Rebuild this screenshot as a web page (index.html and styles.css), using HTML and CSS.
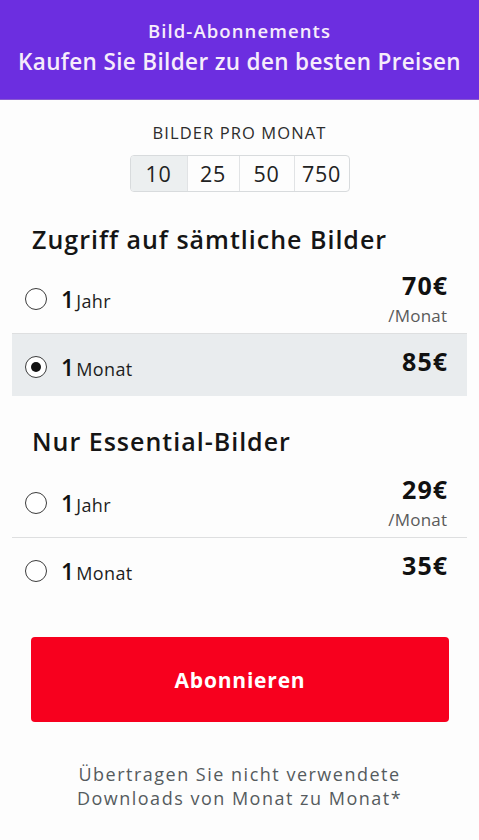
FILE: index.html
```html
<!DOCTYPE html>
<html lang="de">
<head>
<meta charset="utf-8">
<title>Bild-Abonnements</title>
<link rel="stylesheet" href="styles.css">
</head>
<body>
<header class="top">
  <div class="top-sub">Bild-Abonnements</div>
  <div class="top-main">Kaufen Sie Bilder zu den besten Preisen</div>
</header>
<main class="main">
  <div class="count-label">BILDER PRO MONAT</div>
  <div class="seg-wrap">
    <div class="seg">
      <span class="seg-item active">10</span>
      <span class="seg-item">25</span>
      <span class="seg-item">50</span>
      <span class="seg-item">750</span>
    </div>
  </div>

  <h2 class="sec-title first">Zugriff auf sämtliche Bilder</h2>
  <div class="row sep">
    <div class="opt"><span class="radio"></span><span class="num">1</span><span class="unit">Jahr</span></div>
    <div class="price"><div class="amount">70€</div><div class="per">/Monat</div></div>
  </div>
  <div class="row single selected">
    <div class="opt"><span class="radio on"></span><span class="num">1</span><span class="unit">Monat</span></div>
    <div class="price"><div class="amount">85€</div></div>
  </div>

  <h2 class="sec-title second">Nur Essential-Bilder</h2>
  <div class="row sep">
    <div class="opt"><span class="radio"></span><span class="num">1</span><span class="unit">Jahr</span></div>
    <div class="price"><div class="amount">29€</div><div class="per">/Monat</div></div>
  </div>
  <div class="row single">
    <div class="opt"><span class="radio"></span><span class="num">1</span><span class="unit">Monat</span></div>
    <div class="price"><div class="amount">35€</div></div>
  </div>

  <button class="cta">Abonnieren</button>

  <p class="note">Übertragen Sie nicht verwendete<br>Downloads von Monat zu Monat*</p>
</main>
</body>
</html>
```

FILE: styles.css
```css
* { box-sizing: border-box; }
body {
  margin: 0;
  background: #fdfdfd;
  font-family: "Open Sans", "Noto Sans", sans-serif;
  color: #1a1a1a;
}
.top {
  background: #6c2ee0;
  height: 100px;
  color: #f6ecfb;
  text-align: center;
  padding-top: 18px;
  border-bottom: 1px solid #8a5ad0;
}
.top-sub {
  font-size: 18.5px;
  line-height: 26px;
  font-weight: 600;
  letter-spacing: 1.1px;
}
.top-main {
  font-size: 22.5px;
  line-height: 30px;
  margin-top: 3px;
  font-weight: 600;
  letter-spacing: 0.35px;
}
.main {
  padding: 0 12px;
}
.count-label {
  margin-top: 22px;
  text-align: center;
  font-size: 16.5px;
  line-height: 22px;
  font-weight: 500;
  letter-spacing: 1.1px;
  color: #2c2c2c;
}
.seg-wrap {
  display: flex;
  justify-content: center;
  margin-top: 11px;
}
.seg {
  display: grid;
  grid-template-columns: 56px 52px 55px 55px;
  height: 37px;
  border: 1px solid #d8dbdd;
  border-radius: 4px;
  overflow: hidden;
}
.seg-item {
  display: flex;
  align-items: center;
  justify-content: center;
  font-size: 21.5px;
  font-weight: 500;
  letter-spacing: 0.7px;
  color: #222;
  border-left: 1px solid #e1e3e5;
}
.seg-item:first-child { border-left: 0; }
.seg-item.active { background: #eceff0; }
.sec-title {
  margin: 0;
  padding-left: 20px;
  font-size: 25px;
  line-height: 30px;
  font-weight: 600;
  letter-spacing: 1px;
  color: #151515;
}
.sec-title.first { margin-top: 32px; margin-bottom: 10px; }
.sec-title.second { margin-top: 30px; margin-bottom: 12px; }
.row {
  display: flex;
  align-items: center;
  justify-content: space-between;
  padding: 7px 20px 7px 13px;
}
.row.sep { border-bottom: 1px solid #dedfe0; }
.row.single { padding-top: 13px; padding-bottom: 9px; }
.row.single .price { margin-bottom: 12px; }
.row.selected { background: #e9ecee; }
.opt {
  display: flex;
  align-items: center;
}
.radio {
  width: 22px;
  height: 22px;
  border: 1.5px solid #3c3c3c;
  border-radius: 50%;
  background: #fff;
  display: flex;
  align-items: center;
  justify-content: center;
  margin-right: 14px;
}
.radio.on::after {
  content: "";
  width: 10px;
  height: 10px;
  border-radius: 50%;
  background: #111;
}
.num {
  font-size: 23px;
  font-weight: 600;
  line-height: 28px;
  color: #111;
  margin-right: 2px;
}
.unit {
  font-size: 18px;
  line-height: 28px;
  padding-top: 4px;
  font-weight: 500;
  letter-spacing: 0.4px;
  color: #1d1d1d;
}
.price {
  text-align: right;
}
.amount {
  font-size: 25px;
  line-height: 28px;
  font-weight: 700;
  letter-spacing: 1px;
  margin-right: -1px;
  color: #111;
}
.per {
  margin-top: 7px;
  font-size: 17px;
  line-height: 20px;
  font-weight: 500;
  letter-spacing: 0.2px;
  margin-right: -0.2px;
  color: #5a5a5a;
}
.cta {
  display: block;
  width: calc(100% - 37px);
  margin: 37px 18px 0 19px;
  height: 85px;
  border: 0;
  border-radius: 4px;
  background: #f7001e;
  color: #fff;
  font-family: inherit;
  font-size: 21px;
  font-weight: 700;
  letter-spacing: 0.8px;
}
.note {
  margin: 40px 0 0;
  text-align: center;
  font-size: 18px;
  line-height: 24px;
  font-weight: 500;
  letter-spacing: 1.5px;
  color: #555b5e;
}
```
